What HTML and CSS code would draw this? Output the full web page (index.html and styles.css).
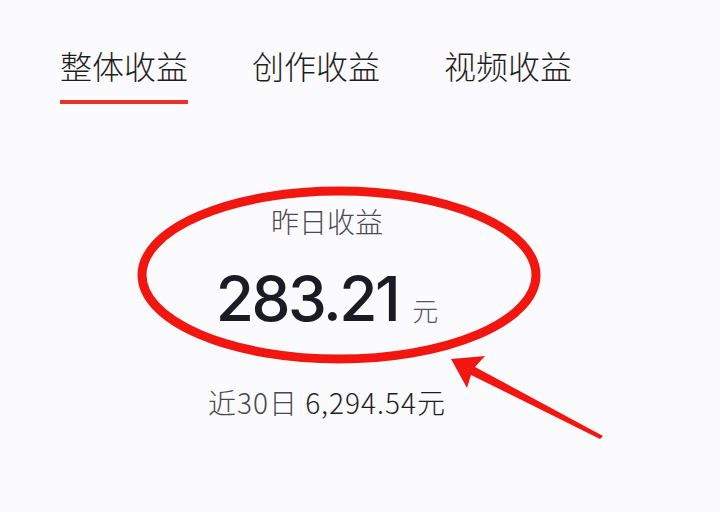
FILE: index.html
```html
<!DOCTYPE html>
<html lang="zh">
<head>
<meta charset="utf-8">
<link rel="stylesheet" href="styles.css">
</head>
<body>
<div class="page">
  <nav class="tabs">
    <div class="tab active">整体收益</div>
    <div class="tab">创作收益</div>
    <div class="tab">视频收益</div>
  </nav>
  <section class="summary">
    <div class="label">昨日收益</div>
    <div class="amount"><span class="num">283.21</span><span class="unit">元</span></div>
    <div class="recent"><span class="recent-label">近30日</span> <span class="recent-value">6,294.54元</span></div>
  </section>
  <svg class="marks" width="720" height="512" viewBox="0 0 720 512">
    <ellipse cx="339" cy="275" rx="197" ry="84" fill="none" stroke="#f21610" stroke-width="9"/>
    <polygon points="451,359 485,356 475,367 603,436 600,439 471,375 467,388" fill="#f21610"/>
  </svg>
</div>
</body>
</html>
```

FILE: styles.css
```css
html, body {
  margin: 0;
  padding: 0;
  background: #fbfafc;
}
.page {
  position: relative;
  width: 720px;
  height: 512px;
  overflow: hidden;
  font-family: "Noto Sans CJK SC", "Noto Sans", sans-serif;
}
.tabs {
  display: flex;
  gap: 64px;
  padding: 49px 0 0 60px;
}
.tab {
  font-size: 32px;
  line-height: 32px;
  font-weight: 300;
  color: #1e1e22;
  padding-bottom: 19px;
  border-bottom: 4px solid transparent;
}
.tab.active {
  border-bottom-color: #e8322b;
}
.summary {
  width: 654px;
  display: flex;
  flex-direction: column;
  align-items: center;
  padding-top: 103px;
}
.label {
  font-size: 28px;
  line-height: 28px;
  font-weight: 300;
  color: #4a4a50;
}
.amount {
  margin-top: 33px;
  display: flex;
  align-items: baseline;
  gap: 14px;
}
.num {
  font-family: "Inter", sans-serif;
  font-size: 62px;
  line-height: 62px;
  font-weight: 500;
  color: #1b1b24;
  letter-spacing: -2.5px;
}
.unit {
  font-size: 26px;
  font-weight: 300;
  color: #555;
}
.recent {
  margin-top: 58px;
  font-size: 28px;
  line-height: 28px;
  font-weight: 300;
  letter-spacing: 1px;
}
.recent-label {
  color: #48484c;
}
.recent-value {
  color: #1e1e22;
}
.marks {
  position: absolute;
  left: 0;
  top: 0;
  pointer-events: none;
}
```
